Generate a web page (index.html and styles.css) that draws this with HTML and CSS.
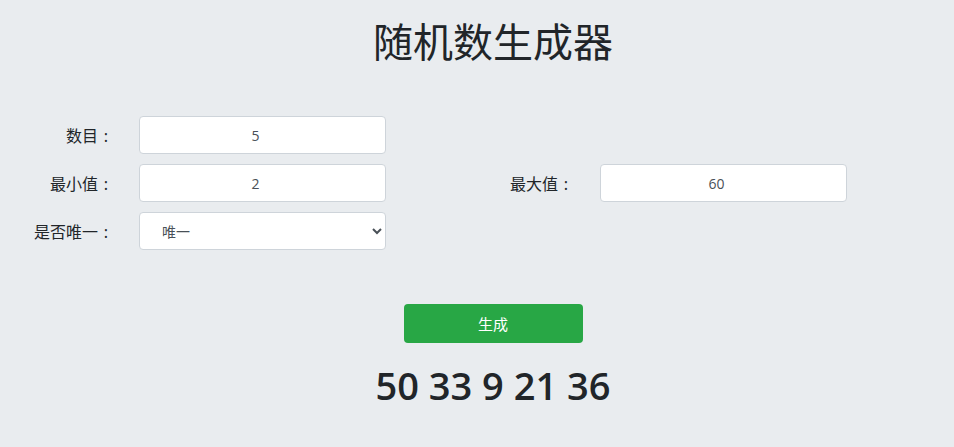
FILE: index.html
```html
<!DOCTYPE html>
<html lang="zh-CN">
<head>
<meta charset="utf-8">
<title>随机数生成器</title>
<link rel="stylesheet" href="styles.css">
</head>
<body>
<div class="page">
  <h1 class="title">随机数生成器</h1>
  <form class="form">
    <div class="row">
      <label class="label">数目<span class="colon">:</span></label>
      <input class="field" type="number" value="5">
    </div>
    <div class="row">
      <label class="label">最小值<span class="colon">:</span></label>
      <input class="field" type="number" value="2">
      <label class="label label-wide">最大值<span class="colon">:</span></label>
      <input class="field" type="number" value="60">
    </div>
    <div class="row">
      <label class="label">是否唯一<span class="colon">:</span></label>
      <select class="field select">
        <option>唯一</option>
        <option>不唯一</option>
      </select>
    </div>
  </form>
  <div class="actions">
    <button class="btn" type="button">生成</button>
    <div class="result">50 33 9 21 36</div>
  </div>
</div>
</body>
</html>
```
FILE: styles.css
```css
html, body {
  margin: 0;
  padding: 0;
  background: #e9ecef;
}
body {
  font-family: "Noto Sans", "Noto Sans CJK SC", sans-serif;
  color: #212529;
}
.page {
  width: 954px;
  height: 447px;
  overflow: hidden;
}
.title {
  margin: 12px 0 0 32px;
  text-align: center;
  font-family: "Noto Sans CJK SC", sans-serif;
  font-size: 40px;
  font-weight: 400;
  line-height: 56px;
  color: #212529;
}
.form {
  margin-top: 48px;
  display: flex;
  flex-direction: column;
  gap: 10px;
}
.row {
  display: flex;
  align-items: center;
  height: 38px;
}
.label {
  flex: none;
  box-sizing: border-box;
  width: 139px;
  text-align: right;
  padding-right: 25px;
  font-family: "Noto Sans CJK SC", sans-serif;
  font-size: 16px;
  color: #212529;
  white-space: nowrap;
}
.colon {
  display: inline-block;
  width: 16px;
  text-align: center;
  font-family: "Noto Sans", sans-serif;
  font-size: 16px;
}
.label-wide {
  width: 214px;
  padding-right: 26px;
}
.field {
  box-sizing: border-box;
  flex: none;
  width: 247px;
  height: 38px;
  border: 1px solid #ced4da;
  border-radius: 4px;
  background: #fff;
  text-align: center;
  font-family: "Open Sans", "Noto Sans CJK SC", sans-serif;
  font-size: 14px;
  color: #495057;
  padding: 0 26px 0 12px;
  outline: none;
  -moz-appearance: textfield;
}
.field::-webkit-outer-spin-button,
.field::-webkit-inner-spin-button {
  -webkit-appearance: none;
  margin: 0;
}
.select {
  text-align: left;
  padding: 0 6px 0 18px;
  font-family: "Noto Sans CJK SC", sans-serif;
}
.actions {
  margin: 54px 0 0 32px;
  display: flex;
  flex-direction: column;
  align-items: center;
}
.btn {
  width: 179px;
  height: 39px;
  border: none;
  border-radius: 4px;
  background: #28a745;
  color: #fff;
  font-family: "Noto Sans CJK SC", sans-serif;
  font-size: 15px;
}
.result {
  margin-top: 14px;
  font-family: "Open Sans", sans-serif;
  font-weight: 600;
  font-size: 38px;
  line-height: 56px;
  color: #212529;
}
```
